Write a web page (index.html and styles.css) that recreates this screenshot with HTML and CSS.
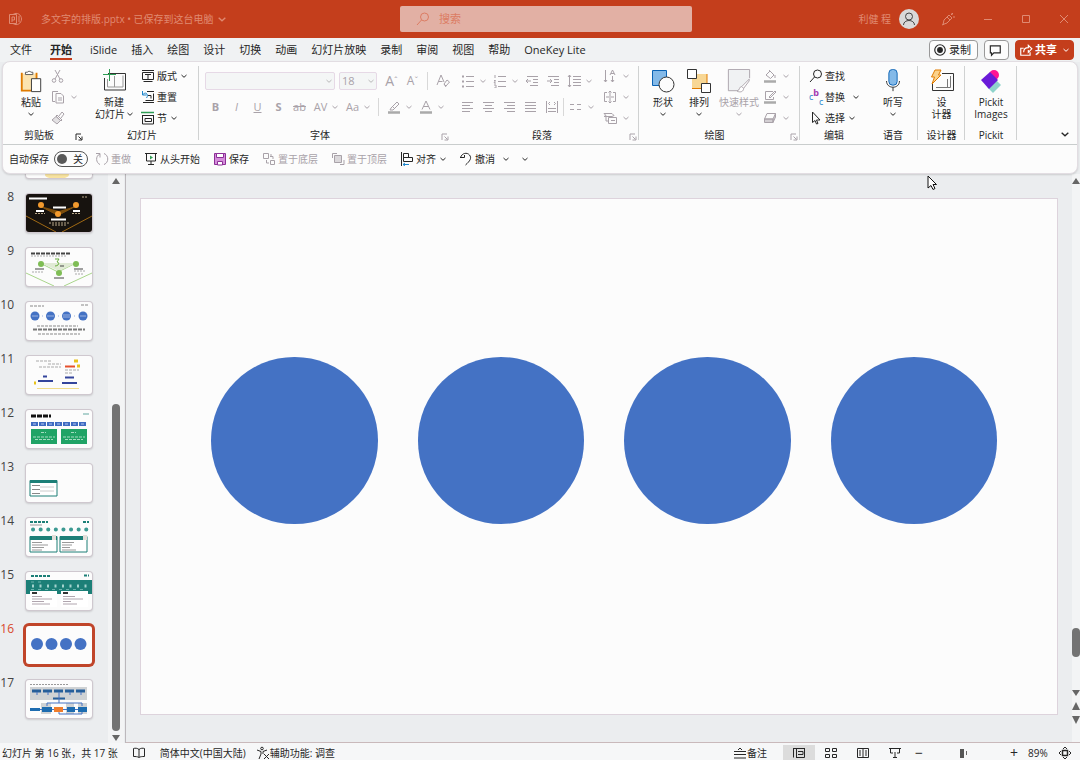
FILE: index.html
```html
<!DOCTYPE html>
<html lang="zh-CN">
<head>
    <meta charset="UTF-8">
    <meta name="viewport" content="width=device-width, initial-scale=1.0">
    <title>多文字的排版.pptx</title>
    <link rel="stylesheet" href="styles.css">
</head>
<body>
    <!-- Icon sprite -->
    <svg class="sprite" aria-hidden="true">
        <symbol id="chev" viewBox="0 0 6 6"><path d="M.5 2 3 4.3 5.500 2"/></symbol>
        <symbol id="launch" viewBox="0 0 8 8"><path d="M1 7V1h5M3.500 3.500l3 3M7 3.500V7H3.500"/></symbol>
        <symbol id="logo" viewBox="0 0 14 14"><path d="M5 2.500C9-.5 13.500 3 13.500 7S9 14.500 5 11.500"/><path d="M1.500 2.500h7v9h-7z"/><path d="M4 10V5h2.500v3H4M11 4v6"/></symbol>
        <symbol id="search" viewBox="0 0 14 14"><circle cx="8.500" cy="5" r="4"/><path d="M5.500 8 1 13"/></symbol>
        <symbol id="user" viewBox="0 0 20 20"><circle cx="10" cy="7.500" r="3.500"/><path d="M4.500 16c0-6 11-6 11 0"/></symbol>
        <symbol id="magicpen" viewBox="0 0 14 14"><path d="M2 12.500 3 8l5-5 3 3-5 5zM6 5l3 3M11 1v2M12 5h2M10 3l2-2M1 13l2-1"/></symbol>
        <symbol id="min" viewBox="0 0 10 10"><path d="M1 5.500h8"/></symbol>
        <symbol id="max" viewBox="0 0 10 10"><path d="M1.500 1.500h7v7h-7z"/></symbol>
        <symbol id="close" viewBox="0 0 10 10"><path d="m1 1 8 8M9 1 1 9"/></symbol>
        <symbol id="record" viewBox="0 0 12 12"><circle cx="6" cy="6" r="4.500"/><circle cx="6" cy="6" r="2" fill="currentColor"/></symbol>
        <symbol id="comment" viewBox="0 0 12 12"><path d="M2 2.500h8.500v6H5L3 10.500v-2H2z"/></symbol>
        <symbol id="share" viewBox="0 0 12 12"><path d="M4 4.500H1.500v6h8V8M4 8c0-3 2-4 4-4V2l3 3-3 3V6"/></symbol>

        <symbol id="paste" viewBox="0 0 24 26"><path d="M2 5h16v19H2z" fill="#fbe3b0" stroke="none"/><path d="M2 4v19.500h10M18 4v7" stroke="#e07b00" stroke-width="2"/><path d="M6 6V3.500h2a2.500 2.500 0 0 1 4 0h2V6z" fill="#fff" stroke="#555"/><path d="M12.500 10.500h10v14h-10z" fill="#fff" stroke="#333"/></symbol>
        <symbol id="cut" viewBox="0 0 14 14"><path d="m4 1 5 9M9 1 4 10"/><circle cx="3" cy="11.500" r="1.800"/><circle cx="10" cy="11.500" r="1.800"/></symbol>
        <symbol id="copy" viewBox="0 0 14 14"><path d="M4 11.500H1.500v-10H7M5 3.500h5L12.500 6v7H5zM7 8h4M7 10h4"/></symbol>
        <symbol id="brush" viewBox="0 0 14 14"><path d="m8 5 3-4 2 2-3 4M6 4l5 5-1 1-5-5z"/><path d="M5 5.500 1 9l5 4 3.500-3.500z" fill="currentColor" fill-opacity=".3"/></symbol>
        <symbol id="newslide" viewBox="0 0 24 24"><path d="M6 4.500h17.500v16.500h-21V9" stroke="#333"/><path d="M12.500 7v11M5.500 10v8H21V6.500" stroke="#999"/><path d="M7.500 0v12M1 5.500h13" stroke="#2e9e54"/></symbol>
        <symbol id="layout" viewBox="0 0 14 14"><path d="M1 1.500h12M2.500 12.500h9M1.500 3.500h11v7h-11zM4 5.500h6M7 6v4"/></symbol>
        <symbol id="reset" viewBox="0 0 14 14"><path d="M6 1.500h7M2 12.500h11M12.500 3.500v7h-8M7 5.500h3v3"/><path d="M1.500 1v4h4M2 4.500C5 1 8 5 5.500 8" stroke="#1f86cc"/></symbol>
        <symbol id="section" viewBox="0 0 14 14"><path d="M0 1.500h13" stroke="#2e9e54" stroke-width="1.500"/><path d="M1 4.500h12M1.500 5v8h11V5M4 7.500h6.500v3H4z"/></symbol>

        <symbol id="eraseA" viewBox="0 0 14 14"><path d="M1 11 5 1l3 7M2.500 7.500h4M8 10l3-4 2.500 2-3.500 4zM8 10l2 3"/></symbol>
        <symbol id="pen" viewBox="0 0 14 14"><path d="m4 8 6-6 2 2-6 6-3 0zM5 6l3 3"/><path d="M1 12.500h12" stroke-width="2.500" stroke="#aaa"/></symbol>
        <symbol id="fontA" viewBox="0 0 14 14"><path d="M3 9.500 7 1l4 8.500M4.500 6.500h5"/><path d="M1 12.500h12" stroke-width="2.500" stroke="#aaa"/></symbol>

        <symbol id="bullets" viewBox="0 0 14 14"><path d="M5 2.500h8M5 7.500h8M5 12.500h8"/><path d="M1 2.500h2M1 7.500h2M1 12.500h2" stroke-width="2"/></symbol>
        <symbol id="numbers" viewBox="0 0 14 14"><path d="M5 2.500h8M5 7.500h8M5 12.500h8M2 1v3M1 6.500h1.500L1 9h2M1 11h2v3H1"/></symbol>
        <symbol id="outdent" viewBox="0 0 14 14"><path d="M2 2.500h11M8 5.500h5M8 8.500h5M5 11.500h8M1 7h5M3 5 1 7l2 2"/></symbol>
        <symbol id="indent" viewBox="0 0 14 14"><path d="M2 2.500h11M8 5.500h5M8 8.500h5M5 11.500h8M1 7h5M4 5l2 2-2 2"/></symbol>
        <symbol id="spacing" viewBox="0 0 14 14"><path d="M6 2.500h8M6 5.500h8M6 8.500h8M6 11.500h8M2.500 1v12M1 3l1.500-2L4 3M1 11l1.500 2L4 11"/></symbol>
        <symbol id="left" viewBox="0 0 14 14"><path d="M1 2.500h11M1 5.500h8M1 8.500h11M1 11.500h8"/></symbol>
        <symbol id="center" viewBox="0 0 14 14"><path d="M1 2.500h11M3 5.500h7M1 8.500h11M3 11.500h7"/></symbol>
        <symbol id="right" viewBox="0 0 14 14"><path d="M1 2.500h11M4 5.500h8M1 8.500h11M4 11.500h8"/></symbol>
        <symbol id="justify" viewBox="0 0 14 14"><path d="M1 2.500h11M1 5.500h11M1 8.500h11M1 11.500h11"/></symbol>
        <symbol id="spread" viewBox="0 0 14 14"><path d="M1.500 1v12M12.500 1v12M3 8.500h8M3 11.500h8M5 2 3.500 3.500 5 5M9 2l1.500 1.500L9 5"/></symbol>
        <symbol id="columns" viewBox="0 0 14 14"><path d="M1 4.500h4M8 4.500h4M1 9.500h4M8 9.500h4"/></symbol>
        <symbol id="textdir" viewBox="0 0 14 14"><path d="M2.500 1v12M1 11l1.500 2L4 11M9.500 7v6M8 11l1.500 2 1.500-2M7 6l2.500-5L12 6M8 4.500h3"/></symbol>
        <symbol id="valign" viewBox="0 0 14 14"><path d="M4 2.500H1.500v9H4M10 2.500h2.500v9H10M7 1v5M5.500 2.500 7 1l1.500 1.500M7 8v5M5.500 11.500 7 13l1.500-1.500M3 7h8"/></symbol>
        <symbol id="smartart" viewBox="0 0 14 14"><path d="M1 2.500h8l2 2-2 1H1l2-1zM3 5v5M3 10h2M5.500 6.500h8v6h-8zM8 9.500h4"/></symbol>

        <symbol id="shapes" viewBox="0 0 24 24"><path d="M1.500 1.500h14v15h-14z" fill="#83b9e8" stroke="#0a62b4"/><circle cx="15.500" cy="15.500" r="7.500" fill="#fcfcfc" stroke="#333"/></symbol>
        <symbol id="arrange" viewBox="0 0 24 24"><path d="M5 5h15v15H5z" fill="#f8d794" stroke="none"/><path d="M20 5v10M5 19.500h9" stroke="#e07b00"/><path d="M.500.500h9v9h-9zM14.500 14.500h9v9h-9z" fill="#fff" stroke="#333"/></symbol>
        <symbol id="quick" viewBox="0 0 24 26"><path d="M13 23.500H.500V.500h23V10" fill="#f0f2f3"/><path d="M23 11 15 19l2 2 6-8zM15 19c-3 0-2 4-5 5 4 2 7 0 7-3" fill="#fff"/></symbol>
        <symbol id="fill" viewBox="0 0 14 14"><path d="m3 6 4-4 4 4-3.500 3.500zM6 1l2 2M12 6v3"/><path d="M1 12.500h12" stroke-width="2.500" stroke="#aaa"/></symbol>
        <symbol id="outline" viewBox="0 0 14 14"><path d="M10 1.500H2.500v8h8V7M6 7l6-6 1 1-6 6z"/><path d="M1 12.500h12" stroke-width="2.500" stroke="#aaa"/></symbol>
        <symbol id="effects" viewBox="0 0 14 14"><path d="M4 2.500h8.500L10 8H1.500z"/><path d="M1.500 8v3.500H10V8zM10 8v3.500L12.500 6V2.500" fill="currentColor" fill-opacity=".5"/></symbol>
        <symbol id="select" viewBox="0 0 14 14"><path d="m3.500 1 7.500 8H7.500L9 12.500 7.500 13 6 9.500l-2.500 2z"/></symbol>
        <symbol id="mic" viewBox="0 0 24 26"><rect x="7.500" y=".5" width="9" height="17" rx="4" fill="#83b9e8" stroke="#0a62b4"/><path d="M5 13c0 9 14 9 14 0M12 20v4"/></symbol>
        <symbol id="designer" viewBox="0 0 24 24"><path d="M12 4.500h11.500v17h-21V13" stroke="#333"/><path d="M20.500 7v11.500H6M17.500 10v8" stroke="#777"/><path d="M5 1h6L8.500 6H11l-9 9 2.500-7H1.500z" fill="#fbd28b" stroke="#e07b00"/></symbol>
        <symbol id="pickit" viewBox="0 0 24 24"><g stroke="none"><circle cx="15" cy="6" r="5" fill="#ff1493"/><path d="m17 11 5 5-8 8-6-6z" fill="#8fd3cb"/><path d="m11 3 8 8-9 9-8-9z" fill="#6a1bd8"/></g></symbol>

        <symbol id="redo" viewBox="0 0 14 14"><path d="M1 1.500h4v4M5 2C0 4 1 11 5 12.500M9 1.500c5 2 5 9 0 11"/></symbol>
        <symbol id="play" viewBox="0 0 14 14"><path d="M1 1.500h12M2.500 2v7h9V2M7 9v3.500M4 12.500h6"/><path d="m6 3.500 3 2-3 2z" fill="#2e9e54" stroke="none"/></symbol>
        <symbol id="save" viewBox="0 0 14 14"><path d="M1.500 1.500h11v11h-11z" fill="#d58ddb" stroke="#8c2f97"/><path d="M3.500 1.500h7v4h-7zM4.500 9.500h5v3.500h-5z" fill="#fff" stroke="#8c2f97"/></symbol>
        <symbol id="back" viewBox="0 0 14 14"><path d="M1.500 1.500h5v5h-5zM8.500 8.500h4v4h-4zM8 4.500h3V7M4.500 8v3H7M9 2v2"/></symbol>
        <symbol id="front" viewBox="0 0 14 14"><path d="M6 1.500H1.500V6M9 12.500h4V8"/><path d="M3.500 3.500h7v7h-7z" fill="currentColor" fill-opacity=".4"/></symbol>
        <symbol id="align" viewBox="0 0 14 14"><path d="M1.500 0v14M3.500 1.500h5v4h-5zM3.500 5.500h9v4h-9z"/><path d="M3 12.500h6M5 11l-2 1.500L5 14" stroke="#1f86cc"/></symbol>
        <symbol id="undo" viewBox="0 0 14 14"><path d="M1 5.500h4.500M1.500 5.500C3 1 8 0 10.500 3S11 9 6.500 13M5.500 5.500V3"/></symbol>

        <symbol id="book" viewBox="0 0 14 14"><path d="M7 3v8M7 3.500C5.500 2 3 2 1.500 2.500v8c2 0 4 0 5.500 1 1.500-1 3-1 5.500-1v-8C11 2 8.500 2 7 3.500z"/></symbol>
        <symbol id="access" viewBox="0 0 14 14"><circle cx="6" cy="2.500" r="1.300"/><path d="M1 4l4 1.500V8l-2 5M11 4 7 5.500V8M8 8l5 5M13 8l-5 5"/></symbol>
        <symbol id="notes" viewBox="0 0 14 14"><path d="M1 5.500h12M1 8.500h12M1 12h12M5 4l2-2 2 2"/></symbol>
        <symbol id="normal" viewBox="0 0 14 14"><path d="M1 2.500h12M1.500 3v8.500M4.500 3v8.500M4 11.500h8.500V3M6 5.500h5v3H6"/></symbol>
        <symbol id="sorter" viewBox="0 0 14 14"><path d="M1.500 2.500h4v3h-4zM8.500 2.500h4v3h-4zM1.500 8.500h4v3h-4zM8.500 8.500h4v3h-4z"/></symbol>
        <symbol id="reading" viewBox="0 0 14 14"><path d="M1.500 2.500h11v9h-11zM7 2v10M3 5h2M3 7h2M3 9h2M9 5h2M9 7h2M9 9h2"/></symbol>
        <symbol id="show" viewBox="0 0 14 14"><path d="M1 2.500h12M2.500 3v4H5M11.500 3v4H9M7 6v5M5 11.500h4"/></symbol>
        <symbol id="fit" viewBox="0 0 14 14"><path d="M4.500 4.500h5v5h-5z" stroke-width="1.500"/><path d="M5 3l2-2 2 2M5 11l2 2 2-2M3 5 1 7l2 2M11 5l2 2-2 2"/></symbol>
    </svg>

    <!-- Title bar -->
    <header class="titlebar">
        <div class="doc">
            <svg class="icon"><use href="#logo"/></svg>
            <button class="doc-name">多文字的排版.pptx • 已保存到这台电脑 <svg class="chev wide"><use href="#chev"/></svg></button>
        </div>
        <label class="search">
            <svg class="icon"><use href="#search"/></svg>
            <input type="search" placeholder="搜索" aria-label="搜索">
        </label>
        <div class="window">
            <span>利健 程</span>
            <button class="avatar" aria-label="帐户"><svg><use href="#user"/></svg></button>
            <button aria-label="画笔"><svg class="icon"><use href="#magicpen"/></svg></button>
            <button aria-label="最小化"><svg class="ctl"><use href="#min"/></svg></button>
            <button aria-label="最大化"><svg class="ctl"><use href="#max"/></svg></button>
            <button aria-label="关闭"><svg class="ctl"><use href="#close"/></svg></button>
        </div>
    </header>

    <!-- Tabs -->
    <nav class="tabs">
        <a href="#file" class="file">文件</a>
        <a href="#home" class="active">开始</a>
        <a href="#islide">iSlide</a>
        <a href="#insert">插入</a>
        <a href="#draw">绘图</a>
        <a href="#design">设计</a>
        <a href="#transition">切换</a>
        <a href="#animation">动画</a>
        <a href="#slideshow">幻灯片放映</a>
        <a href="#rec">录制</a>
        <a href="#review">审阅</a>
        <a href="#view">视图</a>
        <a href="#help">帮助</a>
        <a href="#onekey">OneKey Lite</a>
        <div class="actions">
            <button class="pill"><svg class="icon"><use href="#record"/></svg>录制</button>
            <button class="pill" aria-label="批注"><svg class="icon"><use href="#comment"/></svg></button>
            <button class="pill share"><svg class="icon"><use href="#share"/></svg>共享<svg class="chev"><use href="#chev"/></svg></button>
        </div>
    </nav>

    <!-- Ribbon -->
    <section class="ribbon">
        <div class="groups">
            <div class="group clipboard">
                <div class="body">
                    <button class="large"><svg><use href="#paste"/></svg>粘贴<svg class="chev"><use href="#chev"/></svg></button>
                    <div class="stack off">
                        <button aria-label="剪切"><svg class="icon"><use href="#cut"/></svg></button>
                        <button aria-label="复制"><svg class="icon"><use href="#copy"/></svg><svg class="chev"><use href="#chev"/></svg></button>
                        <button aria-label="格式刷"><svg class="icon"><use href="#brush"/></svg></button>
                    </div>
                </div>
                <div class="caption"><span>剪贴板</span><svg class="launch"><use href="#launch"/></svg></div>
            </div>
            <div class="group slides sep">
                <div class="body">
                    <button class="large"><svg><use href="#newslide"/></svg>新建<span class="line">幻灯片<svg class="chev"><use href="#chev"/></svg></span></button>
                    <div class="stack">
                        <button><svg class="icon"><use href="#layout"/></svg>版式<svg class="chev"><use href="#chev"/></svg></button>
                        <button><svg class="icon"><use href="#reset"/></svg>重置</button>
                        <button><svg class="icon"><use href="#section"/></svg>节<svg class="chev"><use href="#chev"/></svg></button>
                    </div>
                </div>
                <div class="caption"><span>幻灯片</span></div>
            </div>
            <div class="group font off">
                <div class="body rows">
                    <div class="row fields">
                        <select class="family" aria-label="字体"><option></option></select>
                        <select class="size" aria-label="字号"><option>18</option></select>
                        <button class="tool big" aria-label="增大字号">A<sup>ˆ</sup></button>
                        <button class="tool mid" aria-label="减小字号">A<sup>ˇ</sup></button>
                        <i class="bar"></i>
                        <button class="tool" aria-label="清除格式"><svg class="icon"><use href="#eraseA"/></svg></button>
                    </div>
                    <div class="row">
                        <button class="tool bold">B</button>
                        <button class="tool italic">I</button>
                        <button class="tool under">U</button>
                        <button class="tool bold">S</button>
                        <button class="tool strike">ab</button>
                        <button class="tool split">AV<svg class="chev"><use href="#chev"/></svg></button>
                        <button class="tool split">Aa<svg class="chev"><use href="#chev"/></svg></button>
                        <i class="bar"></i>
                        <button class="tool split" aria-label="突出显示"><svg class="icon"><use href="#pen"/></svg><svg class="chev"><use href="#chev"/></svg></button>
                        <button class="tool split" aria-label="字体颜色"><svg class="icon"><use href="#fontA"/></svg><svg class="chev"><use href="#chev"/></svg></button>
                    </div>
                </div>
                <div class="caption"><span>字体</span><svg class="launch"><use href="#launch"/></svg></div>
            </div>
            <div class="group para off sep">
                <div class="body">
                    <div class="rows">
                        <div class="row">
                            <button class="tool split" aria-label="项目符号"><svg class="icon"><use href="#bullets"/></svg><svg class="chev"><use href="#chev"/></svg></button>
                            <button class="tool split" aria-label="编号"><svg class="icon"><use href="#numbers"/></svg><svg class="chev"><use href="#chev"/></svg></button>
                            <button class="tool" aria-label="减少缩进"><svg class="icon"><use href="#outdent"/></svg></button>
                            <button class="tool" aria-label="增加缩进"><svg class="icon"><use href="#indent"/></svg></button>
                            <button class="tool split" aria-label="行距"><svg class="icon"><use href="#spacing"/></svg><svg class="chev"><use href="#chev"/></svg></button>
                        </div>
                        <div class="row">
                            <button class="tool" aria-label="左对齐"><svg class="icon"><use href="#left"/></svg></button>
                            <button class="tool" aria-label="居中"><svg class="icon"><use href="#center"/></svg></button>
                            <button class="tool" aria-label="右对齐"><svg class="icon"><use href="#right"/></svg></button>
                            <button class="tool" aria-label="两端对齐"><svg class="icon"><use href="#justify"/></svg></button>
                            <button class="tool" aria-label="分散对齐"><svg class="icon"><use href="#spread"/></svg></button>
                            <i class="bar tight"></i>
                            <button class="tool split" aria-label="分栏"><svg class="icon"><use href="#columns"/></svg><svg class="chev"><use href="#chev"/></svg></button>
                        </div>
                    </div>
                    <div class="stack">
                        <button aria-label="文字方向"><svg class="icon"><use href="#textdir"/></svg><svg class="chev"><use href="#chev"/></svg></button>
                        <button aria-label="对齐文本"><svg class="icon"><use href="#valign"/></svg><svg class="chev"><use href="#chev"/></svg></button>
                        <button aria-label="转换为 SmartArt"><svg class="icon"><use href="#smartart"/></svg><svg class="chev"><use href="#chev"/></svg></button>
                    </div>
                </div>
                <div class="caption"><span>段落</span><svg class="launch"><use href="#launch"/></svg></div>
            </div>
            <div class="group drawing sep">
                <div class="body">
                    <button class="large"><svg><use href="#shapes"/></svg>形状<svg class="chev"><use href="#chev"/></svg></button>
                    <button class="large"><svg><use href="#arrange"/></svg>排列<svg class="chev"><use href="#chev"/></svg></button>
                    <button class="large off"><svg><use href="#quick"/></svg>快速样式<svg class="chev"><use href="#chev"/></svg></button>
                    <div class="stack off">
                        <button aria-label="形状填充"><svg class="icon"><use href="#fill"/></svg><svg class="chev"><use href="#chev"/></svg></button>
                        <button aria-label="形状轮廓"><svg class="icon"><use href="#outline"/></svg><svg class="chev"><use href="#chev"/></svg></button>
                        <button aria-label="形状效果"><svg class="icon"><use href="#effects"/></svg><svg class="chev"><use href="#chev"/></svg></button>
                    </div>
                </div>
                <div class="caption"><span>绘图</span><svg class="launch off"><use href="#launch"/></svg></div>
            </div>
            <div class="group editing">
                <div class="body">
                    <div class="stack">
                        <button><svg class="icon"><use href="#search"/></svg>查找</button>
                        <button><span class="bc"><em>c</em><b>b</b><em>c</em></span>替换<svg class="chev apart"><use href="#chev"/></svg></button>
                        <button><svg class="icon"><use href="#select"/></svg>选择<svg class="chev"><use href="#chev"/></svg></button>
                    </div>
                </div>
                <div class="caption"><span>编辑</span></div>
            </div>
            <div class="group sep">
                <div class="body single">
                    <button class="large"><svg><use href="#mic"/></svg>听写<svg class="chev"><use href="#chev"/></svg></button>
                </div>
                <div class="caption"><span>语音</span></div>
            </div>
            <div class="group sep">
                <div class="body single">
                    <button class="large"><svg><use href="#designer"/></svg>设<br>计器</button>
                </div>
                <div class="caption"><span>设计器</span></div>
            </div>
            <div class="group sep">
                <div class="body single">
                    <button class="large"><svg><use href="#pickit"/></svg>Pickit<br>Images</button>
                </div>
                <div class="caption"><span>Pickit</span></div>
            </div>
            <button class="collapse" aria-label="折叠功能区"><svg class="chev wide"><use href="#chev"/></svg></button>
        </div>

        <!-- Quick access toolbar -->
        <div class="quickbar">
            <label class="autosave">自动保存 <input type="checkbox"><span class="toggle">关</span></label>
            <button class="off"><svg class="icon"><use href="#redo"/></svg>重做</button>
            <button><svg class="icon"><use href="#play"/></svg>从头开始</button>
            <button><svg class="icon"><use href="#save"/></svg>保存</button>
            <button class="off"><svg class="icon"><use href="#back"/></svg>置于底层</button>
            <button class="off"><svg class="icon"><use href="#front"/></svg>置于顶层</button>
            <button><svg class="icon"><use href="#align"/></svg>对齐<svg class="chev"><use href="#chev"/></svg></button>
            <button><svg class="icon"><use href="#undo"/></svg>撤消<svg class="chev apart"><use href="#chev"/></svg></button>
            <button aria-label="自定义"><svg class="chev first"><use href="#chev"/></svg></button>
        </div>
    </section>

    <!-- Workspace -->
    <main class="work">
        <aside class="panel">
            <ol class="thumbs">
                <li><span></span><svg viewBox="0 0 66 38"><ellipse cx="31" cy="35" rx="12" ry="4" fill="#f8e3a0"/></svg></li>
                <li><span>8</span>
                    <svg class="dark" viewBox="0 0 66 38">
                        <path d="M0 22 30 38M66 22 36 38M14 12l18 9 18-9" stroke="#a06a14" fill="none"/>
                        <path d="M14 12 32 22 50 12 33 17z" fill="#7a4c0c"/>
                        <g fill="#f29a2e"><circle cx="15" cy="11" r="3"/><circle cx="32" cy="20" r="3"/><circle cx="50" cy="11" r="3"/></g>
                        <path d="M3 4.500h18M10 17h8M27 13.500h13M47 17h7M25 25.500h15" stroke="#fff" stroke-width="2"/>
                        <path d="M9 19.500h10M46 19.500h9M23 29h20M26 31h14M56 3h6" stroke="#b9a98c" stroke-dasharray="2 1"/>
                    </svg>
                </li>
                <li><span>9</span>
                    <svg viewBox="0 0 66 38">
                        <path d="M0 25 28 38M66 25 38 38M14 15l18 9 18-9" stroke="#a9d58b" fill="none"/>
                        <path d="M15 15h35L33 23z" fill="#e0ead5"/>
                        <g fill="#7fbd55"><circle cx="15" cy="16" r="3"/><circle cx="33" cy="25" r="3"/><circle cx="50" cy="16" r="3"/></g>
                        <path d="M5 5.500h39" stroke="#444" stroke-width="2" stroke-dasharray="4 1"/>
                        <path d="M5 8h35M6 24h12M48 23h12M49 26h9" stroke="#aaa" stroke-dasharray="2 1"/>
                        <path d="M29 11h4l-2 3c3 0 2 4-2 4" stroke="#69ad3c" fill="none"/>
                        <path d="M9 21h9M28 30h10M48 21h9M34 18h4" stroke="#444"/>
                    </svg>
                </li>
                <li><span>10</span>
                    <svg viewBox="0 0 66 38">
                        <g fill="#4472c4"><circle cx="9" cy="14" r="4.500"/><circle cx="24.500" cy="14" r="4.500"/><circle cx="40.500" cy="14" r="4.500"/><circle cx="57" cy="14" r="4.500"/></g>
                        <path d="M16 14h1M32 14h1M48 14h1M6 14h6M21 14h7M37 13h7M37 15h7M54 14h6" stroke="#9bb2e0"/>
                        <path d="M4 4h14M55 3h7M11 24h41M12 32h42" stroke="#888" stroke-dasharray="3 1"/>
                        <path d="M7 27.500h52" stroke="#777" stroke-width="2" stroke-dasharray="4 1"/>
                    </svg>
                </li>
                <li><span>11</span>
                    <svg viewBox="0 0 66 38">
                        <path d="M10 5h15M22 8h13M13 11h22M39 14h14M39 17h8" stroke="#aaa" stroke-dasharray="3 1"/>
                        <path d="M12 25h15M17 20.500h4M39 21.500h9M36 27h15" stroke="#34459c" stroke-width="2"/>
                        <path d="M39 10.500h10" stroke="#e6502c" stroke-width="2"/>
                        <path d="M48 5h4M51 10h3M8 27h2" stroke="#e8c21c" stroke-width="3"/>
                        <path d="M11 32.500h42" stroke="#f1dc8a"/>
                    </svg>
                </li>
                <li><span>12</span>
                    <svg viewBox="0 0 66 38">
                        <path d="M5 6h20" stroke="#111" stroke-width="3" stroke-dasharray="5 1"/>
                        <path d="M57 4h6" stroke="#63a7a0"/>
                        <path d="M5 14h56" stroke="#3f6bc2" stroke-width="4" stroke-dasharray="7 1"/>
                        <path d="M7 14h52" stroke="#b5c6ec" stroke-dasharray="3 5"/>
                        <path d="M5 19h26v15H5zM35 19h26v15H35z" fill="#21a366"/>
                        <path d="M15 22.500h5M45 22.500h5M7 27h22M9 29.500h18M37 27h22M39 29.500h18" stroke="#a5dcc2" stroke-dasharray="3 1"/>
                    </svg>
                </li>
                <li><span>13</span>
                    <svg viewBox="0 0 66 38">
                        <path d="M4 16.500h27V32H4z" fill="#fff" stroke="#1c7f77"/><path d="M4 16h27v3H4z" fill="#1c7f77"/>
                        <path d="M6 21.500h8M6 25.500h8M6 29.500h8" stroke="#888"/><path d="M14 23h14M14 27h14" stroke="#ccc"/>
                    </svg>
                </li>
                <li><span>14</span>
                    <svg viewBox="0 0 66 38">
                        <path d="M4 4h18M57 4h6" stroke="#1c7f77" stroke-width="2" stroke-dasharray="3 1"/><path d="M4 7h12" stroke="#999"/>
                        <path d="M7 11.500h56" stroke="#3c9a92" stroke-width="4" stroke-linecap="round" stroke-dasharray=".1 7.500"/>
                        <path d="M4 18.500h27V34H4zM34 18.500h27V34H34z" fill="#fff" stroke="#1c7f77"/>
                        <path d="M4 18h27v4H4zM34 18h27v4H34z" fill="#1c7f77"/>
                        <path d="M26 17h4v5h-4zM57 17h4v5h-4z" fill="#e4ddd8"/>
                        <path d="M6 24.500h10M6 27h16M6 29.500h12M6 32h10M36 24.500h12M36 27h10M36 29.500h8M36 32h14" stroke="#999"/>
                    </svg>
                </li>
                <li><span>15</span>
                    <svg viewBox="0 0 66 38">
                        <path d="M5 4h20M58 3.500h5" stroke="#1c7f77" stroke-width="2" stroke-dasharray="3 1"/>
                        <path d="M0 8h66v14H0z" fill="#1c7f77"/>
                        <path d="M6 14h55" stroke="#a4d3ce" stroke-width="3" stroke-dasharray="2 5.500"/><path d="M5 10h13M5 17.500h56" stroke="#69b3ac" stroke-dasharray="3 4"/>
                        <path d="M4 19h27v16H4zM35 19h27v16H35z" fill="#fff"/>
                        <path d="M6 21h5M37 21h5" stroke="#333" stroke-width="2"/>
                        <path d="M6 24.500h10M6 27h20M6 29.500h12M6 32h18M37 24.500h12M37 27h20M37 29.500h8M37 32h14" stroke="#b0a5ae"/>
                    </svg>
                </li>
                <li class="current"><span>16</span>
                    <svg viewBox="0 0 66 38">
                        <g fill="#4472c4"><circle cx="11" cy="18" r="6"/><circle cx="25.500" cy="18" r="6"/><circle cx="40" cy="18" r="6"/><circle cx="54.500" cy="18" r="6"/></g>
                    </svg>
                </li>
                <li><span>17</span>
                    <svg viewBox="0 0 66 38">
                        <path d="M4 4.500h38" stroke="#999" stroke-dasharray="2 1"/><path d="M4 7h57v13H4zM15 23h10v11H15zM40 23h8v11h-8zM52 23h9v11h-9z" fill="#cfd2d4"/>
                        <path d="M6 11h54" stroke="#265f9a" stroke-width="3" stroke-dasharray="9 2"/><path d="M27 18.500h12" stroke="#265f9a" stroke-width="2"/>
                        <path d="M11 12v3M22 12v3M33 12v11M44 12v3M55 12v3M21 26v-3h35v3M8 29.500h50M33 32v2h23v-2" stroke="#4472c4" fill="none"/>
                        <path d="M4 28h10v3H4zM16 27h10v5H16zM41 27h8v5h-8zM52 27h9v5h-9z" fill="#1d6cb0"/><path d="M28 27h9v5h-9z" fill="#ef7d2d"/>
                    </svg>
                </li>
            </ol>
            <div class="scroll">
                <i class="up"></i><i class="thumb"></i><i class="down"></i>
            </div>
        </aside>
        <div class="canvas">
            <div class="slide"><i></i><i></i><i></i><i></i></div>
            <div class="scroll narrow">
                <i class="up"></i><i class="thumb"></i><i class="down"></i><i class="up double"></i><i class="down double"></i>
            </div>
        </div>
    </main>

    <!-- Status bar -->
    <footer class="status">
        <span>幻灯片 第 16 张，共 17 张</span>
        <button aria-label="拼写检查"><svg class="icon"><use href="#book"/></svg></button>
        <button>简体中文(中国大陆)</button>
        <button class="access"><svg class="icon"><use href="#access"/></svg>辅助功能: 调查</button>
        <div class="views">
            <button class="notes"><svg class="icon"><use href="#notes"/></svg>备注</button>
            <button class="view on" aria-label="普通视图"><svg class="icon"><use href="#normal"/></svg></button>
            <button class="view" aria-label="幻灯片浏览"><svg class="icon"><use href="#sorter"/></svg></button>
            <button class="view" aria-label="阅读视图"><svg class="icon"><use href="#reading"/></svg></button>
            <button class="view" aria-label="幻灯片放映"><svg class="icon"><use href="#show"/></svg></button>
            <button class="zoom" aria-label="缩小">−</button>
            <input type="range" min="0" max="100" value="44" aria-label="缩放">
            <button class="zoom" aria-label="放大">+</button>
            <button class="percent">89%</button>
            <button aria-label="适应窗口"><svg class="icon"><use href="#fit"/></svg></button>
        </div>
    </footer>

    <svg class="cursor" viewBox="0 0 10 16"><path d="M1 1v12l3-2.500 2 4 2-1-2-4h3.500z" fill="#fff" stroke="#111"/></svg>
</body>
</html>
```
FILE: styles.css
```css
* {
    margin: 0;
    padding: 0;
    box-sizing: border-box;
}

body {
    position: relative;
    display: flex;
    flex-direction: column;
    height: 100vh;
    overflow: hidden;
    background: #ebedef;
    color: #262626;
    font: 10px/12px "Open Sans", "Noto Sans CJK SC", sans-serif;
    white-space: nowrap;
}

button, input, select {
    font: inherit;
    color: inherit;
    background: none;
    border: 0;
}

button {
    display: inline-flex;
    align-items: center;
}

a {
    color: inherit;
    text-decoration: none;
}

svg {
    flex: none;
    fill: none;
    stroke: currentColor;
}

.sprite {
    display: none;
}

.icon {
    width: 14px;
    height: 14px;
}

.chev {
    width: 6px;
    height: 6px;
    margin-left: 4px;
}

.chev.wide {
    width: 8px;
    height: 8px;
}

.chev.apart {
    margin-left: 8px;
}

.off {
    color: #a9a2a9;
}

/* Title bar */
.titlebar {
    display: grid;
    grid-template-columns: 1fr 292px 1fr;
    align-items: center;
    height: 38px;
    padding-left: 12px;
    background: #c43e1c;
    color: #e08a72;
}

.doc {
    display: flex;
    align-items: center;
    margin-left: -4px;
    gap: 19px;
}

.search {
    display: flex;
    align-items: center;
    gap: 9px;
    height: 26px;
    padding: 0 16px;
    border-radius: 2px;
    background: #e2b0a4;
    color: #dc7c63;
}

.search input {
    flex: 1;
    min-width: 0;
    font-size: 11px;
    outline: none;
}

.search input::placeholder {
    color: #dc7c63;
}

.window {
    display: flex;
    align-items: center;
    justify-content: flex-end;
    padding-right: 11px;
}

.window button {
    margin-left: 28px;
}

.window .avatar {
    margin-left: 8px;
    margin-right: -6px;
    border-radius: 50%;
    background: #d9d9d9;
    color: #444;
}

.avatar svg {
    width: 20px;
    height: 20px;
}

.ctl {
    width: 10px;
    height: 10px;
}

/* Tabs */
.tabs {
    display: flex;
    align-items: center;
    gap: 14px;
    height: 24px;
    padding: 0 6px 0 10px;
    background: #f0f2f3;
    font-size: 11px;
}

.tabs a {
    padding: 4px 0 2px;
    border-bottom: 2px solid transparent;
}

.tabs .file, .tabs .active {
    margin-right: 4px;
}

.tabs .active {
    border-color: #c43e1c;
    font-weight: bold;
}

.actions {
    display: flex;
    gap: 6px;
    margin-left: auto;
}

.pill {
    gap: 2px;
    height: 20px;
    padding: 0 6px 0 3px;
    border: 1px solid #999;
    border-radius: 4px;
    background: #fcfcfc;
}

.share {
    border-color: #c43e1c;
    background: #c43e1c;
    color: #fff;
    padding-right: 4px;
    font-weight: bold;
}

/* Ribbon */
.ribbon {
    z-index: 1;
    margin: -1px 2px 0;
    border: 1px solid #e2dde2;
    border-radius: 8px;
    background: #fcfcfc;
    box-shadow: 0 1px 2px #0002;
}

.groups {
    display: grid;
    grid-template-columns: 82px 114px 256px 184px 161px 68px 50px 47px 52px 1fr;
    height: 83px;
    border-bottom: 1px solid #c9cdcd;
}

.group {
    display: flex;
    flex-direction: column;
    position: relative;
    padding-top: 3px;
}

.sep::after {
    content: "";
    position: absolute;
    right: 0;
    top: 4px;
    bottom: 4px;
    width: 1px;
    background: #d0d2d2;
}

.body {
    display: flex;
    height: 63px;
}

.body.single {
    justify-content: center;
}

.caption {
    display: flex;
    align-items: center;
    height: 14px;
    color: #262626;
    text-align: center;
}

.caption span {
    flex: 1;
}

.launch {
    width: 8px;
    height: 8px;
    margin: 3px 2px 0 0;
}

.font .launch, .para .launch {
    color: #a9a2a9;
}

.font .launch {
    margin-right: 6px;
}

.large {
    flex-direction: column;
    width: 36px;
    padding-top: 4px;
}

.large > svg:first-child {
    width: 24px;
    height: 24px;
    margin-bottom: 3px;
}

.large .chev {
    margin: 3px 0;
}

.large .line {
    display: flex;
    align-items: center;
}

.large .line .chev {
    margin: 0 0 0 2px;
}

.stack {
    display: flex;
    flex-direction: column;
    align-items: flex-start;
}

.stack button {
    height: 21px;
}

.stack .icon {
    margin-right: 2px;
}

.clipboard .body {
    padding-left: 8px;
}

.clipboard .large {
    width: 40px;
}

.slides .body {
    padding-left: 8px;
}

.slides .large {
    width: 42px;
    margin-right: 6px;
}

.drawing .body {
    padding-left: 6px;
}

.drawing .large.off {
    width: 44px;
    margin-right: 2px;
}

.editing .body {
    padding-left: 9px;
}

.rows {
    flex-direction: column;
    padding: 3px 0 0 2px;
}

.row {
    display: flex;
    align-items: center;
    height: 26px;
}

.font .rows {
    padding-left: 6px;
}

.fields select {
    appearance: none;
    height: 18px;
    margin-right: 4px;
    padding-left: 2px;
    border: 1px solid #e6d9e6;
    border-radius: 2px;
    background: #f4f6f6 url("data:image/svg+xml,%3Csvg xmlns='http://www.w3.org/2000/svg' width='6' height='6' fill='none' stroke='%23b8b8b8'%3E%3Cpath d='M.5 2 3 4.300 5.500 2'/%3E%3C/svg%3E") no-repeat right 2px center;
    font-size: 11px;
}

.family {
    width: 130px;
}

.size {
    width: 38px;
}

.tool {
    justify-content: center;
    width: 21px;
    height: 20px;
    font-size: 11px;
}

.tool.split {
    width: 32px;
}

.tool .chev {
    margin-left: 5px;
}

.tool.big {
    font-size: 14px;
}

.tool.mid {
    font-size: 12px;
}

.tool sup {
    font-size: 9px;
}

.bold {
    font-weight: bold;
}

.italic {
    font-style: italic;
}

.under {
    text-decoration: underline;
}

.strike {
    text-decoration: line-through;
}

.bar {
    width: 1px;
    height: 18px;
    margin: 0 4px;
    background: #d8d8d8;
}

.bar.tight {
    margin: 0 1px;
}

.para .stack {
    margin-left: 6px;
}

.bc {
    display: flex;
    align-items: center;
    width: 16px;
    height: 18px;
    font-size: 9px;
    line-height: 9px;
}

.bc b {
    align-self: start;
    color: #a33bb0;
}

.bc em {
    color: #1f86cc;
    font-style: normal;
}

.bc b + em {
    align-self: end;
}

.collapse {
    align-self: end;
    justify-self: end;
    padding: 6px 8px;
}

/* Quick access toolbar */
.quickbar {
    display: flex;
    align-items: center;
    gap: 13px;
    height: 28px;
    padding-left: 6px;
}

.quickbar .icon {
    margin-right: 2px;
}

.quickbar .first {
    margin-left: 0;
}

.autosave {
    display: flex;
    align-items: center;
    margin-right: -6px;
}

.autosave input {
    position: absolute;
    opacity: 0;
}

.toggle {
    display: flex;
    align-items: center;
    justify-content: space-between;
    width: 34px;
    height: 16px;
    margin-left: 5px;
    padding: 0 4px 0 2px;
    border: 1px solid #555;
    border-radius: 8px;
}

.toggle::before {
    content: "";
    width: 10px;
    height: 10px;
    border-radius: 50%;
    background: #595959;
}

/* Workspace */
.work {
    display: flex;
    flex: 1;
    min-height: 0;
}

.panel {
    display: flex;
    width: 126px;
    border-right: 1px solid #bcb8bc;
}

.thumbs {
    display: flex;
    flex: 1;
    flex-direction: column;
    justify-content: flex-end;
    gap: 16px;
    padding-bottom: 25px;
    overflow: hidden;
    list-style: none;
}

.thumbs li {
    display: flex;
    flex: none;
    gap: 12px;
    height: 38px;
    color: #444;
    font-size: 12px;
    line-height: 6px;
}

.thumbs span {
    width: 14px;
    text-align: right;
}

.thumbs svg {
    width: 66px;
    height: 38px;
    border-radius: 3px;
    background: #fcfcfc;
    box-shadow: 0 0 0 1px #cfc8cf, 0 1px 2px 1px #0002;
    stroke: none;
}

.thumbs .dark {
    background: #17130f;
}

.thumbs .current {
    color: #d8492a;
}

.current svg {
    box-shadow: 0 0 0 3px #c0452a;
}

.scroll {
    display: flex;
    flex-direction: column;
    align-items: center;
    width: 16px;
    padding: 4px 0 2px;
    margin-right: 1px;
    background: #f3f4f5;
}

.scroll .thumb {
    width: 8px;
    height: 58%;
    margin-top: auto;
    margin-bottom: 4px;
    border-radius: 4px;
    background: #737373;
}

.scroll i {
    flex: none;
}

.up, .down {
    border: 4px solid transparent;
}

.up {
    border-top: 0;
    border-bottom: 6px solid #666;
}

.down {
    border-bottom: 0;
    border-top: 6px solid #666;
}

.canvas {
    display: flex;
    flex: 1;
    justify-content: space-between;
    border-bottom: 1px solid #c9b9bb;
}

.slide {
    display: grid;
    grid-template-columns: repeat(4, 1fr);
    flex: 1;
    align-items: center;
    gap: 40px;
    margin: 25px 15px 28px;
    padding: 0 60px 32px 70px;
    background: #fcfcfc;
    box-shadow: 0 0 0 1px #ddd3dc;
}

.slide i {
    aspect-ratio: 1;
    border-radius: 50%;
    background: #4472c4;
}

.narrow {
    width: 8px;
    margin: 0;
    padding-bottom: 18px;
}

.narrow .thumb {
    height: 29px;
    margin-bottom: 33px;
}

.double {
    margin-top: 6px;
}

.up.double {
    border-bottom-width: 8px;
}

.down.double {
    border-top-width: 8px;
}

/* Status bar */
.status {
    display: flex;
    align-items: center;
    gap: 14px;
    height: 17px;
    padding: 3px 8px 0 2px;
    background: #f6f7f8;
}

.access {
    margin-left: -4px;
}

.views {
    display: flex;
    align-items: center;
    margin-left: auto;
}

.notes {
    margin-right: 16px;
}

.view {
    justify-content: center;
    width: 32px;
    height: 17px;
}

.view.on {
    background: #dcdcdc;
}

.zoom {
    justify-content: center;
    width: 16px;
    font-size: 14px;
}

.status input {
    appearance: none;
    width: 79px;
    background: linear-gradient(#666, #666) no-repeat center / 1px 4px;
}

.status input::-webkit-slider-thumb {
    appearance: none;
    width: 4px;
    height: 9px;
    background: #555;
}

.percent {
    width: 36px;
    padding-left: 6px;
}

.cursor {
    position: absolute;
    z-index: 2;
    left: 927px;
    top: 175px;
    width: 10px;
    height: 16px;
}
```
